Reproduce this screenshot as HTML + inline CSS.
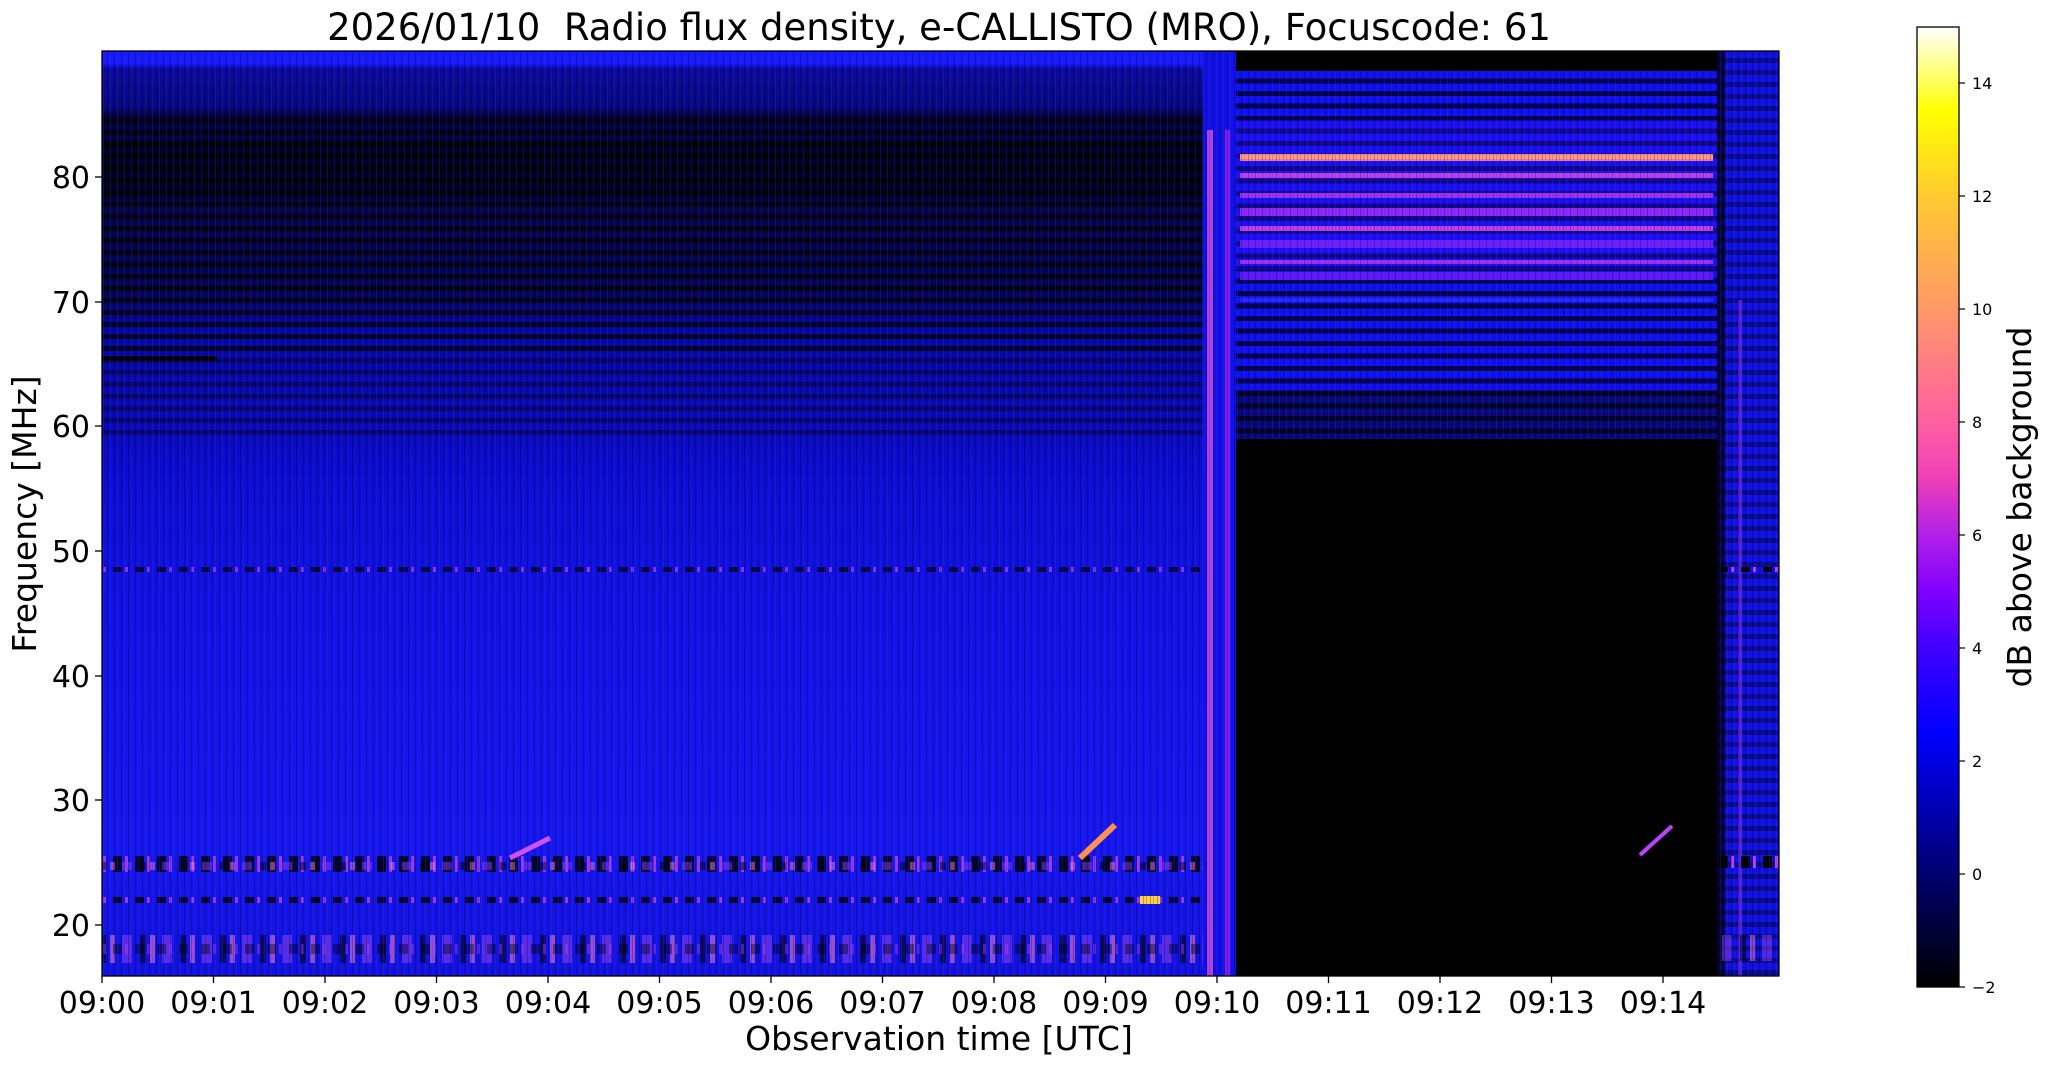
<!DOCTYPE html>
<html><head><meta charset="utf-8"><style>
html,body{margin:0;padding:0;background:#fff;}
svg{display:block;}
text{font-family:"DejaVu Sans","Liberation Sans",sans-serif;fill:#000;}
</style></head><body>
<svg width="2047" height="1067" viewBox="0 0 2047 1067" xmlns="http://www.w3.org/2000/svg">
<defs>
<linearGradient id="cb" x1="0" y1="0" x2="0" y2="1">
<stop offset="0" stop-color="#ffffff"/>
<stop offset="0.088" stop-color="#ffff00"/>
<stop offset="0.176" stop-color="#ffca30"/>
<stop offset="0.294" stop-color="#ff9868"/>
<stop offset="0.41" stop-color="#ff60a0"/>
<stop offset="0.47" stop-color="#f040b8"/>
<stop offset="0.53" stop-color="#b020e8"/>
<stop offset="0.588" stop-color="#8000ff"/>
<stop offset="0.647" stop-color="#4000ff"/>
<stop offset="0.735" stop-color="#0000ff"/>
<stop offset="0.882" stop-color="#000070"/>
<stop offset="1" stop-color="#000000"/>
</linearGradient>
<linearGradient id="leftbg" x1="0" y1="51" x2="0" y2="976" gradientUnits="userSpaceOnUse">
<stop offset="0" stop-color="#1a1aff"/>
<stop offset="0.013" stop-color="#1a1aff"/>
<stop offset="0.02" stop-color="#0a0a9a"/>
<stop offset="0.06" stop-color="#080880"/>
<stop offset="0.07" stop-color="#03033a"/>
<stop offset="0.26" stop-color="#050550"/>
<stop offset="0.30" stop-color="#0707a0"/>
<stop offset="0.41" stop-color="#0a0ab8"/>
<stop offset="0.45" stop-color="#0c0cd0"/>
<stop offset="0.60" stop-color="#1212e6"/>
<stop offset="0.86" stop-color="#1616f0"/>
<stop offset="1" stop-color="#1212e0"/>
</linearGradient>
<pattern id="hb" width="10" height="12" patternUnits="userSpaceOnUse" y="51">
<rect y="7" width="10" height="5" fill="#000" opacity="0.75"/>
</pattern>
<pattern id="vt" width="7" height="10" patternUnits="userSpaceOnUse">
<rect x="2" width="1" height="10" fill="#000" opacity="0.25"/>
<rect x="5" width="1" height="10" fill="#3030ff" opacity="0.25"/>
</pattern>
<pattern id="rb" width="10" height="12.5" patternUnits="userSpaceOnUse" y="71">
<rect width="10" height="7.5" fill="#1010f0"/>
<rect y="7.5" width="10" height="5" fill="#00004a"/>
</pattern>
<pattern id="dots" width="22" height="10" patternUnits="userSpaceOnUse">
<rect x="3" width="9" height="10" fill="#000"/>
<rect x="15" width="3" height="10" fill="#c040e0"/>
</pattern>
<pattern id="pinkdots" width="40" height="10" patternUnits="userSpaceOnUse">
<rect x="2" width="10" height="10" fill="#9040f0"/>
<rect x="20" width="6" height="10" fill="#000"/>
<rect x="30" width="5" height="10" fill="#ff80c0"/>
</pattern>
</defs>

<text x="939" y="40" font-size="37" text-anchor="middle" xml:space="preserve">2026/01/10  Radio flux density, e-CALLISTO (MRO), Focuscode: 61</text>

<rect x="102" y="51" width="1101" height="925" fill="url(#leftbg)"/>
<rect x="102" y="115" width="1101" height="240" fill="url(#hb)"/>
<rect x="102" y="355" width="1101" height="80" fill="url(#hb)" opacity="0.5"/>
<rect x="102" y="140" width="1101" height="60" fill="#000" opacity="0.5"/>
<rect x="102" y="356" width="115" height="5" fill="#000"/>
<rect x="102" y="567" width="1101" height="5" fill="url(#dots)" opacity="0.7"/>
<rect x="102" y="856" width="1101" height="16" fill="url(#dots)" opacity="0.8"/>
<rect x="102" y="862" width="1101" height="8" fill="url(#pinkdots)" opacity="0.5"/>
<rect x="102" y="897" width="1101" height="6" fill="url(#dots)" opacity="0.8"/>
<rect x="1140" y="896" width="20" height="8" fill="#ffd040"/>
<rect x="102" y="935" width="1101" height="28" fill="url(#pinkdots)" opacity="0.55"/>
<rect x="102" y="944" width="1101" height="10" fill="url(#dots)" opacity="0.4"/>
<rect x="102" y="51" width="1101" height="925" fill="url(#vt)"/>
<path d="M510 858 L550 838" stroke="#d050ff" stroke-width="5"/>
<path d="M1080 858 L1115 825" stroke="#ff9050" stroke-width="6"/>

<rect x="1203" y="51" width="33" height="925" fill="#1212e8"/>
<rect x="1207" y="130" width="6" height="846" fill="#b040e0"/>
<rect x="1225" y="130" width="5" height="846" fill="#8020f0"/>
<rect x="1203" y="51" width="33" height="925" fill="url(#vt)"/>

<rect x="1236" y="51" width="481" height="925" fill="#000"/>
<rect x="1236" y="71" width="481" height="368" fill="url(#rb)"/>
<rect x="1236" y="120" width="481" height="150" fill="#3010ff" opacity="0.35"/>
<rect x="1240" y="154" width="473" height="7" fill="#ff7890"/>
<rect x="1240" y="155" width="473" height="4" fill="#ffa070"/>
<rect x="1240" y="173" width="473" height="5" fill="#c040e0"/>
<rect x="1240" y="193" width="473" height="5" fill="#a030f0"/>
<rect x="1240" y="208" width="473" height="8" fill="#9028f8"/>
<rect x="1240" y="226" width="473" height="5" fill="#c040e0"/>
<rect x="1240" y="240" width="473" height="8" fill="#7020ff"/>
<rect x="1240" y="260" width="473" height="4" fill="#a030f0"/>
<rect x="1240" y="272" width="473" height="8" fill="#6018ff"/>
<rect x="1240" y="298" width="473" height="4" fill="#2828ff"/>
<rect x="1236" y="390" width="481" height="49" fill="#000" opacity="0.5"/>
<rect x="1236" y="71" width="481" height="368" fill="url(#vt)"/>
<path d="M1640 855 L1672 826" stroke="#c040ff" stroke-width="4"/>

<rect x="1717" y="51" width="62" height="925" fill="#1010e0"/>
<rect x="1717" y="51" width="62" height="925" fill="url(#hb)" opacity="0.5"/>
<rect x="1717" y="51" width="8" height="925" fill="#000" opacity="0.7"/>
<rect x="1738" y="300" width="4" height="676" fill="#8030f0" opacity="0.6"/>
<rect x="1717" y="567" width="62" height="5" fill="url(#dots)"/>
<rect x="1717" y="856" width="62" height="12" fill="url(#dots)"/>
<rect x="1717" y="935" width="62" height="26" fill="url(#pinkdots)" opacity="0.5"/>
<rect x="1717" y="51" width="62" height="925" fill="url(#vt)"/>

<rect x="102" y="51" width="1677" height="925" fill="none" stroke="#000" stroke-width="1.3"/>

<g stroke="#000" stroke-width="1.3">
<line x1="95" y1="177" x2="102" y2="177"/><line x1="95" y1="302" x2="102" y2="302"/><line x1="95" y1="426" x2="102" y2="426"/><line x1="95" y1="551" x2="102" y2="551"/><line x1="95" y1="676" x2="102" y2="676"/><line x1="95" y1="800" x2="102" y2="800"/><line x1="95" y1="925" x2="102" y2="925"/>
</g>
<g font-size="30" text-anchor="end">
<text x="90" y="188">80</text><text x="90" y="313">70</text><text x="90" y="437">60</text><text x="90" y="562">50</text><text x="90" y="687">40</text><text x="90" y="811">30</text><text x="90" y="936">20</text>
</g>
<g stroke="#000" stroke-width="1.3">
<line x1="102" y1="976" x2="102" y2="983"/><line x1="213.5" y1="976" x2="213.5" y2="983"/><line x1="325" y1="976" x2="325" y2="983"/><line x1="436.5" y1="976" x2="436.5" y2="983"/><line x1="548" y1="976" x2="548" y2="983"/><line x1="659.5" y1="976" x2="659.5" y2="983"/><line x1="771" y1="976" x2="771" y2="983"/><line x1="882.5" y1="976" x2="882.5" y2="983"/><line x1="994" y1="976" x2="994" y2="983"/><line x1="1105.5" y1="976" x2="1105.5" y2="983"/><line x1="1217" y1="976" x2="1217" y2="983"/><line x1="1328.5" y1="976" x2="1328.5" y2="983"/><line x1="1440" y1="976" x2="1440" y2="983"/><line x1="1551.5" y1="976" x2="1551.5" y2="983"/><line x1="1663" y1="976" x2="1663" y2="983"/>
</g>
<g font-size="30" text-anchor="middle">
<text x="102" y="1013">09:00</text><text x="213.5" y="1013">09:01</text><text x="325" y="1013">09:02</text><text x="436.5" y="1013">09:03</text><text x="548" y="1013">09:04</text><text x="659.5" y="1013">09:05</text><text x="771" y="1013">09:06</text><text x="882.5" y="1013">09:07</text><text x="994" y="1013">09:08</text><text x="1105.5" y="1013">09:09</text><text x="1217" y="1013">09:10</text><text x="1328.5" y="1013">09:11</text><text x="1440" y="1013">09:12</text><text x="1551.5" y="1013">09:13</text><text x="1663" y="1013">09:14</text>
</g>
<text x="939" y="1050" font-size="33" text-anchor="middle">Observation time [UTC]</text>
<text transform="translate(36,514) rotate(-90)" font-size="33" text-anchor="middle">Frequency [MHz]</text>

<rect x="1917" y="27" width="42" height="960" fill="url(#cb)" stroke="#000" stroke-width="1.3"/>
<g stroke="#000" stroke-width="1.2">
<line x1="1959" y1="83" x2="1965" y2="83"/><line x1="1959" y1="196" x2="1965" y2="196"/><line x1="1959" y1="309" x2="1965" y2="309"/><line x1="1959" y1="422" x2="1965" y2="422"/><line x1="1959" y1="535" x2="1965" y2="535"/><line x1="1959" y1="648" x2="1965" y2="648"/><line x1="1959" y1="761" x2="1965" y2="761"/><line x1="1959" y1="874" x2="1965" y2="874"/><line x1="1959" y1="987" x2="1965" y2="987"/>
</g>
<g font-size="16">
<text x="1972" y="89">14</text><text x="1972" y="202">12</text><text x="1972" y="315">10</text><text x="1972" y="428">8</text><text x="1972" y="541">6</text><text x="1972" y="654">4</text><text x="1972" y="767">2</text><text x="1972" y="880">0</text><text x="1972" y="993">−2</text>
</g>
<text transform="translate(2031,507) rotate(-90)" font-size="33" text-anchor="middle">dB above background</text>
</svg>
</body></html>
